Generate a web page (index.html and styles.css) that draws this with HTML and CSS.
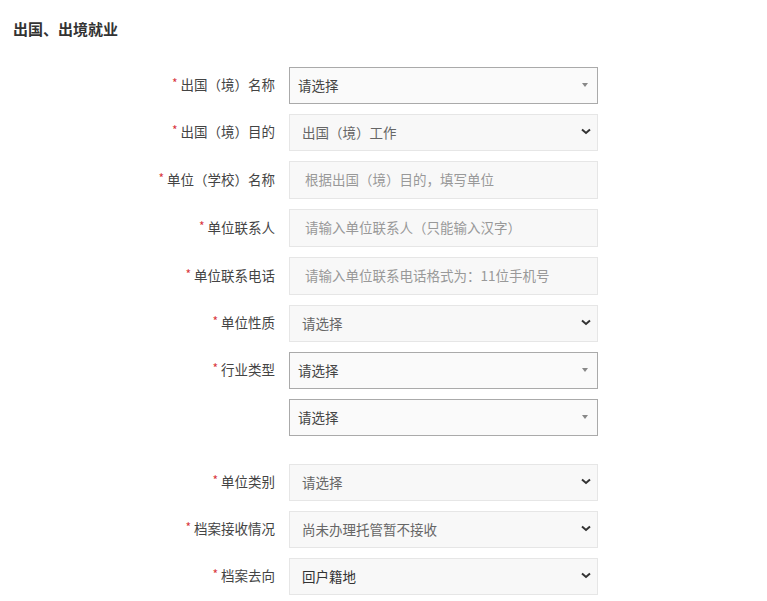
FILE: index.html
```html
<!DOCTYPE html>
<html lang="zh-CN">
<head>
  <meta charset="UTF-8" />
  <meta name="viewport" content="width=device-width, initial-scale=1.0"/>
  <title>出国、出境就业</title>
  <link rel="stylesheet" href="styles.css">
</head>
<body>
  <h2 class="section-title">出国、出境就业</h2>

  <form class="job-form">
    <div class="row">
      <label><span class="req">*</span>出国（境）名称</label>
      <div class="combo">
        <span>请选择</span>
        <svg class="tri" width="6" height="4" viewBox="0 0 6 4"><path d="M0 0h6L3 4z" fill="#888"/></svg>
      </div>
    </div>

    <div class="row">
      <label><span class="req">*</span>出国（境）目的</label>
      <div class="pick">
        <span>出国（境）工作</span>
        <svg class="chev" width="10" height="7" viewBox="0 0 10 7"><path d="M1 1.5l4 3.5 4-3.5" fill="none" stroke="#333" stroke-width="2"/></svg>
      </div>
    </div>

    <div class="row">
      <label><span class="req">*</span>单位（学校）名称</label>
      <input class="field" type="text" placeholder="根据出国（境）目的，填写单位" />
    </div>

    <div class="row">
      <label><span class="req">*</span>单位联系人</label>
      <input class="field" type="text" placeholder="请输入单位联系人（只能输入汉字）" />
    </div>

    <div class="row">
      <label><span class="req">*</span>单位联系电话</label>
      <input class="field" type="text" placeholder="请输入单位联系电话格式为：11位手机号" />
    </div>

    <div class="row">
      <label><span class="req">*</span>单位性质</label>
      <div class="pick">
        <span>请选择</span>
        <svg class="chev" width="10" height="7" viewBox="0 0 10 7"><path d="M1 1.5l4 3.5 4-3.5" fill="none" stroke="#333" stroke-width="2"/></svg>
      </div>
    </div>

    <div class="row">
      <label><span class="req">*</span>行业类型</label>
      <div class="combo">
        <span>请选择</span>
        <svg class="tri" width="6" height="4" viewBox="0 0 6 4"><path d="M0 0h6L3 4z" fill="#888"/></svg>
      </div>
    </div>

    <div class="row">
      <label></label>
      <div class="combo">
        <span>请选择</span>
        <svg class="tri" width="6" height="4" viewBox="0 0 6 4"><path d="M0 0h6L3 4z" fill="#888"/></svg>
      </div>
    </div>

    <div class="row row-spaced">
      <label><span class="req">*</span>单位类别</label>
      <div class="pick">
        <span>请选择</span>
        <svg class="chev" width="10" height="7" viewBox="0 0 10 7"><path d="M1 1.5l4 3.5 4-3.5" fill="none" stroke="#333" stroke-width="2"/></svg>
      </div>
    </div>

    <div class="row">
      <label><span class="req">*</span>档案接收情况</label>
      <div class="pick">
        <span>尚未办理托管暂不接收</span>
        <svg class="chev" width="10" height="7" viewBox="0 0 10 7"><path d="M1 1.5l4 3.5 4-3.5" fill="none" stroke="#333" stroke-width="2"/></svg>
      </div>
    </div>

    <div class="row">
      <label><span class="req">*</span>档案去向</label>
      <div class="pick pick-dark">
        <span>回户籍地</span>
        <svg class="chev" width="10" height="7" viewBox="0 0 10 7"><path d="M1 1.5l4 3.5 4-3.5" fill="none" stroke="#333" stroke-width="2"/></svg>
      </div>
    </div>
  </form>
</body>
</html>
```

FILE: styles.css
```css
body {
  font-family: "Noto Sans CJK SC", "Noto Sans", sans-serif;
  background: #fff;
  color: #333;
  margin: 0;
  padding: 0;
}
.section-title {
  font-size: 15px;
  font-weight: 700;
  color: #333;
  margin: 0;
  padding: 18px 0 0 13px;
  line-height: 22px;
}
.job-form {
  margin-top: 27px;
}
.row {
  display: flex;
  align-items: center;
  margin-bottom: 10px;
}
.row-spaced {
  margin-top: 28px;
}
.row label {
  width: 289px;
  flex-shrink: 0;
  text-align: right;
  font-size: 13.5px;
  color: #444;
  padding: 0 14px 3px 0;
  box-sizing: border-box;
}
.req {
  color: #d9363e;
  font-size: 12px;
  margin-right: 3px;
  position: relative;
  top: -2px;
}
.combo, .pick, .field {
  width: 309px;
  box-sizing: border-box;
  font-family: inherit;
  font-size: 13.5px;
}
.combo {
  height: 37px;
  border: 1px solid #aaa;
  background: #fafafa;
  display: flex;
  align-items: center;
  justify-content: space-between;
  padding: 0 9px 2px 8px;
  color: #444;
}
.pick {
  height: 37px;
  border: 1px solid #e6e6e6;
  background: #f8f8f8;
  display: flex;
  align-items: center;
  justify-content: space-between;
  padding: 0 6px 2px 12px;
  color: #666;
}
.pick-dark {
  color: #333;
}
.field {
  height: 38px;
  border: 1px solid #e6e6e6;
  background: #f8f8f8;
  padding: 0 15px 2px;
  color: #333;
  outline: none;
}
.field::placeholder {
  color: #999;
}
```
